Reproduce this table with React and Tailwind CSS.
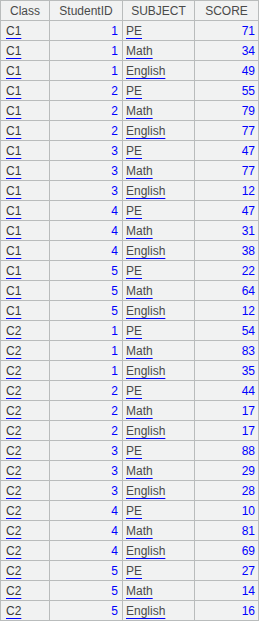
import React from "react";

const rows = [];
const subs = ["PE", "Math", "English"];
const scores = [71,34,49,55,79,77,47,77,12,47,31,38,22,64,12,54,83,35,44,17,17,88,29,28,10,81,69,27,14,16];
let i = 0;
for (const c of ["C1", "C2"]) {
  for (let s = 1; s <= 5; s++) {
    for (const sub of subs) {
      rows.push({ c, s, sub, score: scores[i++] });
    }
  }
}

const cell = "border-r border-b border-[#b9bcbc] bg-[#f1f2f2] h-[20px] flex items-center text-[12px] leading-none";
const link = "underline decoration-[#0000ff] underline-offset-[3px] decoration-1";

export default function App() {
  return (
    <div className="w-[261px] h-[621px] bg-white overflow-hidden" style={{ fontFamily: '"Liberation Sans", Arial, sans-serif' }}>
      <div className="w-[259px] grid grid-cols-[49px_73px_72px_64px] border-l border-t border-[#b9bcbc]">
        <div className={`${cell} h-[20px] justify-center text-[#4a4a4a]`}>Class</div>
        <div className={`${cell} h-[20px] justify-center text-[#4a4a4a]`}>StudentID</div>
        <div className={`${cell} h-[20px] justify-center text-[#4a4a4a]`}>SUBJECT</div>
        <div className={`${cell} h-[20px] justify-center text-[#4a4a4a]`}>SCORE</div>
        {rows.map((r, k) => (
          <React.Fragment key={k}>
            <div className={`${cell} pl-[5px] text-[#3a3a3a]`}><span className={link}>{r.c}</span></div>
            <div className={`${cell} justify-end pr-[4px] text-[#0000ff]`}>{r.s}</div>
            <div className={`${cell} pl-[3px] text-[#4a4a4a]`}><span className={link}>{r.sub}</span></div>
            <div className={`${cell} justify-end pr-[3px] text-[#0000ff]`}>{r.score}</div>
          </React.Fragment>
        ))}
      </div>
    </div>
  );
}
